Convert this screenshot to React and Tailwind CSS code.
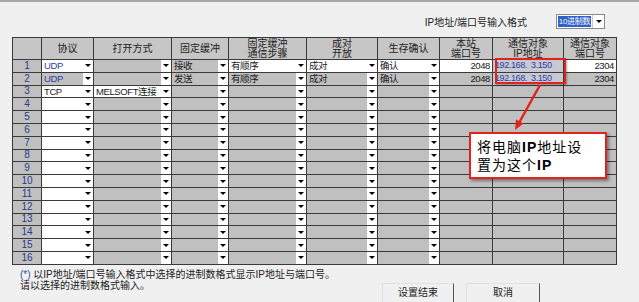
import React from 'react';

// column widths match the dialog grid
const COLS = 'grid-cols-[29px_52px_78px_57px_78px_71px_62px_53px_71px_53px]';

const headers = ['', '协议', '打开方式', '固定缓冲', '固定缓冲\n通信步骤', '成对\n开放', '生存确认', '本站\n端口号', '通信对象\nIP地址', '通信对象\n端口号'];

// dropdown columns: 1..6
const DD = [false, true, true, true, true, true, true, false, false, false];

const IP = '192.168.  3.150';

// each cell: [text, white?, align]
const rows = [
  [['UDP', true], ['', false], ['接收', false], ['有顺序', true], ['成对', true], ['确认', true], ['2048', true, 'r'], [IP, false, 'ip'], ['2304', true, 'r']],
  [['UDP', false], ['', false], ['发送', false], ['有顺序', false], ['成对', false], ['确认', false], ['2048', false, 'r'], [IP, false, 'ip'], ['2304', false, 'r']],
  [['TCP', true], ['MELSOFT连接', true], ['', false], ['', false], ['', false], ['', false], ['', false], ['', false], ['', false]],
];
for (let i = 3; i < 16; i++) {
  rows.push([['', true], ['', false], ['', false], ['', false], ['', false], ['', false], ['', false], ['', false], ['', false]]);
}

function Arrow() {
  return (
    <span className="w-[10px] h-full bg-white flex items-center justify-center shrink-0">
      <span className="w-0 h-0 border-x-[3px] border-t-[3px] border-x-transparent border-t-black" />
    </span>
  );
}

function Cell({ cell, dd }) {
  const [text, white, align] = cell;
  const blue = text === 'UDP' || align === 'ip';
  return (
    <div className={`border-r border-b border-[#3a3a3a] flex items-stretch overflow-hidden ${white ? 'bg-white' : 'bg-[#c0c0c0]'}`}>
      <span
        className={`flex-1 flex items-center whitespace-pre leading-none text-[9.5px] tracking-[-0.4px] ${align === 'r' ? 'justify-end pr-[2px]' : 'pl-[2px]'} ${blue ? 'text-[#2a3f9e]' : 'text-[#1a1a1a]'} ${align === 'ip' ? 'bg-[#c6c8d2] text-[9px]' : ''}`}
      >
        {text}
      </span>
      {dd && <Arrow />}
    </div>
  );
}

export default function App() {
  return (
    <div
      className="w-[639px] h-[302px] bg-[#f0f0f0] relative overflow-hidden text-[10px] text-[#1a1a1a]"
      style={{ fontFamily: '"Liberation Sans", "Noto Sans CJK SC", sans-serif' }}
    >
      <div className="h-[2px] bg-[#a8a8a8]" />

      {/* 输入格式 */}
      <div className="h-[35px] flex items-start justify-end pt-[12px] pr-[34px]">
        <span className="mt-[1px] text-[10px] text-[#222]">IP地址/端口号输入格式</span>
        <div className="ml-[29px] w-[49px] h-[15px] border border-[#8a8a8a] bg-white flex items-stretch">
          <span className="flex-1 m-[1px] bg-[#2f5fc9] text-white flex items-center justify-center leading-none text-[8px] whitespace-nowrap overflow-hidden tracking-[-0.3px]">10进制数</span>
          <span className="w-[12px] shrink-0 flex items-center justify-center border-l border-[#c8c8c8]">
            <span className="w-0 h-0 border-x-[3px] border-t-[3px] border-x-transparent border-t-black" />
          </span>
        </div>
      </div>

      {/* 设置表 */}
      <div className={`ml-[12px] w-[605px] grid ${COLS} grid-rows-[22px_repeat(16,12.8px)] border-l border-t border-[#3a3a3a]`}>
        {headers.map((h, i) => (
          <div
            key={'h' + i}
            className="border-r border-b border-[#3a3a3a] bg-[#c6c6c6] flex items-center justify-center text-center whitespace-pre leading-[10px] text-[#222]"
          >
            {h}
          </div>
        ))}
        {rows.map((r, ri) => (
          <React.Fragment key={ri}>
            <div className="border-r border-b border-[#3a3a3a] bg-[#c0c0c0] flex items-center justify-center leading-none text-[#2b3a86]">
              {ri + 1}
            </div>
            {r.map((c, ci) => (
              <Cell key={ci} cell={c} dd={DD[ci + 1]} />
            ))}
          </React.Fragment>
        ))}
      </div>

      {/* 说明 + 按钮 */}
      <div className="flex items-start">
        <div className="ml-[20px] mt-[4px] leading-[11px] text-[10px] text-[#222] w-[340px]">
          <div><span className="text-[#3050a0]">(*)</span> 以IP地址/端口号输入格式中选择的进制数格式显示IP地址与端口号。</div>
          <div>请以选择的进制数格式输入。</div>
        </div>
        <div className="ml-[22px] mt-[18px] flex gap-[12px]">
          <button className="w-[72px] h-[22px] bg-[#f0f0f0] border border-t-[#e0e0e0] border-l-[#e0e0e0] border-r-[#555] border-b-[#555] text-[10px] text-[#222] pb-[2px]">
            设置结束
          </button>
          <button className="w-[74px] h-[22px] bg-[#f0f0f0] border border-t-[#e0e0e0] border-l-[#e0e0e0] border-r-[#555] border-b-[#555] text-[10px] text-[#222] pb-[2px]">
            取消
          </button>
        </div>
      </div>

      {/* 标注 */}
      <div className="absolute left-[495px] top-[58px] w-[71px] h-[26px] border-[2.5px] border-[#e3231b] shadow-[1px_1px_2px_rgba(0,0,0,0.35)]" />
      <svg className="absolute left-0 top-0 pointer-events-none" width="639" height="302">
        <line x1="540" y1="85" x2="519.5" y2="122" stroke="#e3231b" strokeWidth="2.5" />
        <polygon points="515,130 523.5,123.5 516,119.5" fill="#e3231b" />
      </svg>
      <div
        className="absolute left-[469px] top-[132px] w-[138px] h-[47px] border-2 border-[#e3231b] bg-white shadow-[2px_2px_3px_rgba(0,0,0,0.4)] pl-[6px] pt-[4px] text-[14px] leading-[18px] tracking-[1px] text-black"
        style={{ fontFamily: '"Liberation Sans", "Noto Sans CJK SC", sans-serif' }}
      >
        <div>将电脑<b>IP</b>地址设</div>
        <div>置为这个<b>IP</b></div>
      </div>
    </div>
  );
}
